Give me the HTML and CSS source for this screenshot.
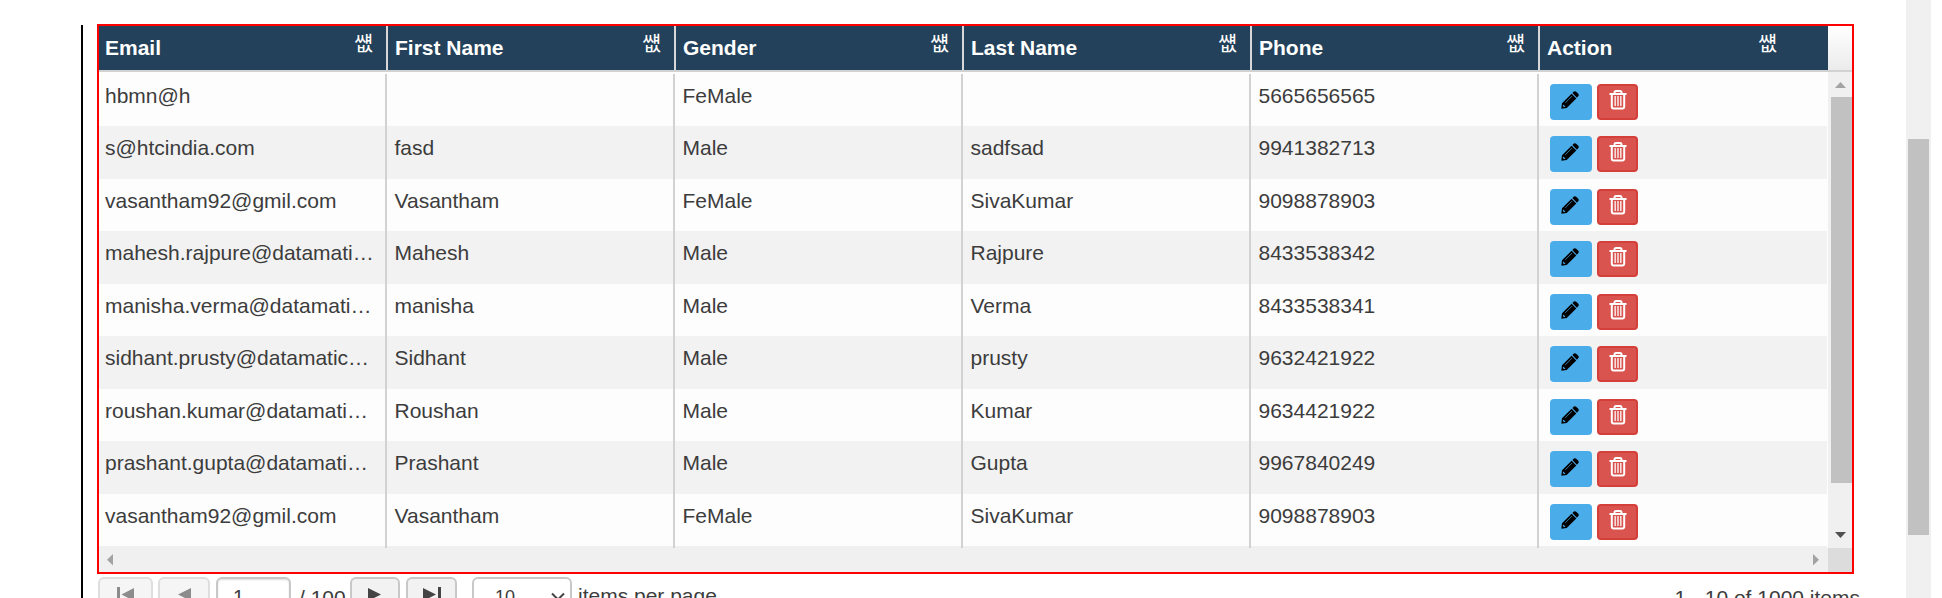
FILE: index.html
```
<!DOCTYPE html>
<html lang="en">
<head>
<meta charset="utf-8">
<title>Users</title>
<link rel="stylesheet" href="styles.css">
</head>
<body>
<svg class="defs" width="0" height="0">
  <symbol id="pencil" viewBox="0 0 18 18"><path d="M0.3 17.7 1 12.300 10.600 2.700 15.300 7.400 5.700 17ZM11.400 2 12.900.600Q14-.200 15.200.700L17.300 2.800Q18.200 4 17.400 5.100L15.900 6.700Z" fill="#000"/><path d="M2.300 13.400 4.600 15.700 2.900 16.100 1.900 15.100Z" fill="#4bacea"/><path d="M4.300 11.800 11 5.100" stroke="#4bacea" stroke-width=".7"/></symbol>
  <symbol id="trash" viewBox="0 0 18 20"><path d="M.5 4H17.500M5.500 4V2.600Q5.500 1 7 1H11Q12.500 1 12.500 2.600V4M2.800 4V16.500Q2.800 18.400 4.700 18.400H13.300Q15.200 18.400 15.200 16.500V4" fill="none" stroke="#fff" stroke-width="2"/><path d="M6.200 6V16M9 6V16M11.800 6V16" stroke="#fff" stroke-opacity=".8" stroke-width="1.600"/></symbol>
</svg>
<div class="page">
  <main class="panel">
    <div class="grid">
      <div class="head">
        <div class="cols">
          <div class="th">Email<span class="filter">&#xC35E;</span></div>
          <div class="th">First Name<span class="filter">&#xC35E;</span></div>
          <div class="th">Gender<span class="filter">&#xC35E;</span></div>
          <div class="th">Last Name<span class="filter">&#xC35E;</span></div>
          <div class="th">Phone<span class="filter">&#xC35E;</span></div>
          <div class="th">Action<span class="filter">&#xC35E;</span></div>
        </div>
        <div class="head-pad"></div>
      </div>
      <div class="body">
        <div class="content">
          <div class="rows">
            <div class="row"><div class="td">hbmn@h</div><div class="td"></div><div class="td">FeMale</div><div class="td"></div><div class="td">5665656565</div><div class="td act"><button class="btn edit"><svg><use href="#pencil"/></svg></button><button class="btn del"><svg><use href="#trash"/></svg></button></div></div>
            <div class="row"><div class="td">s@htcindia.com</div><div class="td">fasd</div><div class="td">Male</div><div class="td">sadfsad</div><div class="td">9941382713</div><div class="td act"><button class="btn edit"><svg><use href="#pencil"/></svg></button><button class="btn del"><svg><use href="#trash"/></svg></button></div></div>
            <div class="row"><div class="td">vasantham92@gmil.com</div><div class="td">Vasantham</div><div class="td">FeMale</div><div class="td">SivaKumar</div><div class="td">9098878903</div><div class="td act"><button class="btn edit"><svg><use href="#pencil"/></svg></button><button class="btn del"><svg><use href="#trash"/></svg></button></div></div>
            <div class="row"><div class="td">mahesh.rajpure@datamati…</div><div class="td">Mahesh</div><div class="td">Male</div><div class="td">Rajpure</div><div class="td">8433538342</div><div class="td act"><button class="btn edit"><svg><use href="#pencil"/></svg></button><button class="btn del"><svg><use href="#trash"/></svg></button></div></div>
            <div class="row"><div class="td">manisha.verma@datamati…</div><div class="td">manisha</div><div class="td">Male</div><div class="td">Verma</div><div class="td">8433538341</div><div class="td act"><button class="btn edit"><svg><use href="#pencil"/></svg></button><button class="btn del"><svg><use href="#trash"/></svg></button></div></div>
            <div class="row"><div class="td">sidhant.prusty@datamatic…</div><div class="td">Sidhant</div><div class="td">Male</div><div class="td">prusty</div><div class="td">9632421922</div><div class="td act"><button class="btn edit"><svg><use href="#pencil"/></svg></button><button class="btn del"><svg><use href="#trash"/></svg></button></div></div>
            <div class="row"><div class="td">roushan.kumar@datamati…</div><div class="td">Roushan</div><div class="td">Male</div><div class="td">Kumar</div><div class="td">9634421922</div><div class="td act"><button class="btn edit"><svg><use href="#pencil"/></svg></button><button class="btn del"><svg><use href="#trash"/></svg></button></div></div>
            <div class="row"><div class="td">prashant.gupta@datamati…</div><div class="td">Prashant</div><div class="td">Male</div><div class="td">Gupta</div><div class="td">9967840249</div><div class="td act"><button class="btn edit"><svg><use href="#pencil"/></svg></button><button class="btn del"><svg><use href="#trash"/></svg></button></div></div>
            <div class="row"><div class="td">vasantham92@gmil.com</div><div class="td">Vasantham</div><div class="td">FeMale</div><div class="td">SivaKumar</div><div class="td">9098878903</div><div class="td act"><button class="btn edit"><svg><use href="#pencil"/></svg></button><button class="btn del"><svg><use href="#trash"/></svg></button></div></div>
            <div class="row tail"><div class="td"></div><div class="td"></div><div class="td"></div><div class="td"></div><div class="td"></div><div class="td"></div></div>
          </div>
          <div class="vbar">
            <svg class="tri" width="12" height="6"><path d="M0 6 5.500 0 11 6Z" fill="#a3a3a3"/></svg>
            <div class="vthumb"></div>
            <svg class="tri down" width="12" height="6"><path d="M0 0H11L5.500 6Z" fill="#505050"/></svg>
          </div>
        </div>
        <div class="hbar">
          <svg width="6" height="12"><path d="M6 0V11.500L0 5.750Z" fill="#a3a3a3"/></svg>
          <svg width="6" height="12"><path d="M0 0V11.500L6 5.750Z" fill="#a3a3a3"/></svg>
          <div class="corner"></div>
        </div>
      </div>
    </div>
    <div class="pager">
      <button class="pg first off"><svg width="18" height="14"><path d="M0 0H3V14H0ZM17 1V14L4.500 7.500Z" fill="#8c8c8c"/></svg></button>
      <button class="pg prev off"><svg width="14" height="14"><path d="M13 1V14L0 7.500Z" fill="#8c8c8c"/></svg></button>
      <div class="num">1</div>
      <span class="total">/ 100</span>
      <button class="pg next"><svg width="14" height="14"><path d="M0 1V14L13 7.500Z" fill="#444"/></svg></button>
      <button class="pg last"><svg width="18" height="14"><path d="M0 1V14L13 7.500ZM15 0H18V14H15Z" fill="#444"/></svg></button>
      <div class="size"><span>10</span><svg width="14" height="10"><path d="M1 1.500 7 7.500 13 1.500" fill="none" stroke="#444" stroke-width="2"/></svg></div>
      <span class="per">items per page</span>
      <span class="info">1 - 10 of 1000 items</span>
    </div>
  </main>
  <div class="scroll"><div class="thumb"></div></div>
</div>
</body>
</html>
```
FILE: styles.css
```
* { box-sizing: border-box; }
body { margin: 0; background: #fff; color: #3c3c3c; font: 21px/24px "Liberation Sans", Arial, sans-serif; overflow: hidden; }
.defs { display: block; }
.page { display: flex; justify-content: space-between; height: 598px; padding: 0 11px 0 81px; overflow: hidden; }
.panel { width: 1778px; height: 574px; margin-top: 25px; border-left: 2px solid #000; padding-left: 14px; }
.grid { width: 1757px; height: 550px; margin-top: -1px; border: 2px solid #f00; }
.head { display: flex; height: 46px; border-bottom: 2px solid #d2d2d2; }
.cols { display: flex; width: 1729px; background: #23415a; }
.th { display: flex; justify-content: space-between; width: 288px; padding: 10px 13px 0 7px; border-left: 2px solid #d8d8d8; color: #fff; font-weight: 700; }
.th:first-child { width: 287px; padding-left: 6px; border-left: 0; }
.th:last-child { width: 290px; padding-right: 51px; }
.filter { margin-top: -5px; font: 400 20px/24px "Noto Sans CJK KR", sans-serif; }
.head-pad { flex: 1; background: linear-gradient(#fff, #ebebeb); }
.content { display: flex; height: 476px; }
.rows { width: 1728px; padding-top: 1.500px; background: #fdfdfd; }
.row { display: flex; height: 52.500px; background: #fdfdfd; }
.row:nth-child(even) { background: #f2f2f2; }
.row.tail { height: 2px; background: #f0f0f0; }
.td { width: 288px; padding: 10.300px 0 0 7.500px; border-left: 2px solid #d2d2d2; white-space: nowrap; overflow: hidden; }
.td:first-child { width: 286px; padding-left: 6px; border-left: 0; }
.td:last-child { width: 290px; }
.tail .td { padding-top: 0; }
.td.act { display: flex; gap: 5px; padding: 10.300px 0 0 11px; }
.btn { display: flex; justify-content: center; align-items: flex-start; width: 42px; height: 36px; padding: 0; border: 0; border-radius: 4px; background: #4bacea; }
.edit svg { width: 18px; height: 18px; margin: 7px 2px 0 0; }
.del { width: 41px; border: 2px solid #d43f3a; background: #d9534f; }
.del svg { width: 18px; height: 20px; margin-top: 4px; }
.vbar { display: flex; flex-direction: column; width: 25px; padding: 10px 1px 10px 3px; border-left: 1px solid #fdfdfd; background: #f0f0f0; }
.tri { display: block; flex: none; margin-left: 4px; }
.vthumb { width: 21px; height: 386px; margin-top: 9px; background: #c1c1c1; }
.down { margin-top: auto; }
.hbar { display: flex; align-items: center; justify-content: space-between; height: 24px; padding-left: 8px; background: #f0f0f0; }
.hbar svg:nth-child(2) { margin: 0 9px 0 auto; }
.corner { width: 24px; height: 24px; background: #dcdcdc; }
.pager { display: flex; height: 50px; margin-top: 3px; padding-left: 1px; }
.pg, .num, .size { height: 38px; border: 2px solid #c8c8c8; border-radius: 6px; background: #f2f2f2; }
.pg { display: flex; justify-content: center; padding: 8px 0 0; }
.off { border-color: #dedede; background: #f5f5f5; }
.first { width: 55px; }
.prev { width: 52px; margin-left: 5px; padding-left: 2px; }
.num { width: 75px; margin-left: 6px; padding: 6px 0 0 15px; background: #fff; font-size: 20px; box-shadow: inset 0 1px 2px #ddd; }
.total { width: 51px; margin: 9px 0 0 8px; }
.next { width: 50px; }
.last { width: 51px; margin-left: 6px; }
.size { display: flex; justify-content: space-between; width: 100px; margin-left: 15px; padding: 6px 5px 0 21px; background: #fff; font-size: 18px; }
.size svg { margin-top: 7px; }
.per { margin: 7px 0 0 6px; }
.info { margin: 9px -1px 0 auto; }
.scroll { width: 25px; height: 598px; padding: 139px 2px 0; background: #f0f0f0; }
.thumb { width: 21px; height: 396px; background: #c1c1c1; }
```
